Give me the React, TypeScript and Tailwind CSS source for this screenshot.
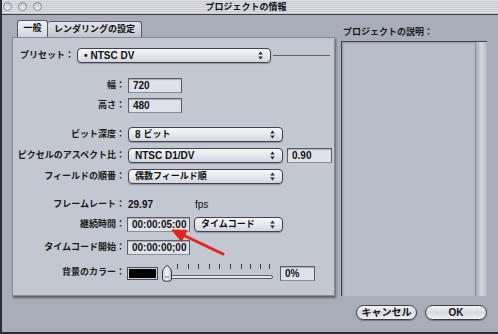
import React from "react";

const font = "font-['Liberation_Sans','Noto_Sans_CJK_JP',sans-serif]";

function Arrows() {
  return (
    <svg width="5" height="9" viewBox="0 0 5 9" className="shrink-0">
      <path d="M2.5 0.5L4.8 3.4H0.2z M2.5 8.5L0.2 5.6h4.6z" fill="#2a2c33" />
    </svg>
  );
}

function Select({ className, children }: { className: string; children: React.ReactNode }) {
  return (
    <div
      className={`flex h-[15px] shrink-0 items-center justify-between rounded-[4px] border border-[#3e4251] bg-gradient-to-b from-[#f7f8fa] via-[#e6e8ee] to-[#d3d6de] pl-[6px] pr-[7px] shadow-[0_1px_1px_rgba(0,0,0,0.25)] ${className}`}
    >
      <span className="flex items-center text-[#111]">{children}</span>
      <Arrows />
    </div>
  );
}

function Field({ className, children }: { className: string; children: React.ReactNode }) {
  return (
    <div
      className={`flex h-[15px] shrink-0 items-center border border-[#5a5e6b] border-b-[#8a8e9a] bg-[#dfe2ea] pl-[4px] text-[10px] font-bold text-[#111] shadow-[inset_0_1px_1px_rgba(0,0,0,0.25)] ${className}`}
    >
      {children}
    </div>
  );
}

function Row({ label, className, children }: { label: string; className: string; children: React.ReactNode }) {
  return (
    <div className={`flex items-center ${className}`}>
      <span className="w-[112px] shrink-0 text-right text-[9px] font-bold text-[#1a1a1a]">{label}</span>
      <div className="ml-[3px] flex items-center">{children}</div>
    </div>
  );
}

function Slider() {
  const ticks = [15, 26, 36, 47, 57, 68, 79, 88, 98, 107];
  return (
    <svg width="112" height="18" viewBox="0 0 112 18" className="ml-[4px] shrink-0">
      <defs>
        <linearGradient id="thumb" x1="0" x2="1" y1="0" y2="0">
          <stop offset="0" stopColor="#c9ccd4" />
          <stop offset="0.5" stopColor="#f4f5f8" />
          <stop offset="1" stopColor="#b9bcc6" />
        </linearGradient>
      </defs>
      {ticks.map((x) => (
        <line key={x} x1={x + 0.5} x2={x + 0.5} y1="0" y2="5" stroke="#3a3c44" strokeWidth="1" />
      ))}
      <rect x="1.5" y="11.5" width="109" height="3" rx="1.5" fill="#e6e8ee" stroke="#5a5d68" />
      <path
        d="M5 1.5C8 3.5 9.5 5.5 9.5 8L9.5 14.5Q9.5 17.2 7 17.2L3 17.2Q0.5 17.2 0.5 14.5L0.5 8C0.5 5.5 2 3.5 5 1.5Z"
        fill="url(#thumb)"
        stroke="#33353d"
      />
      <line x1="3" x2="7" y1="13" y2="13" stroke="#777" />
    </svg>
  );
}

function Button({ className, children }: { className: string; children: React.ReactNode }) {
  return (
    <div
      className={`flex h-[15px] items-center justify-center rounded-full border border-[#3c3f4a] bg-gradient-to-b from-[#f3f4f7] via-[#d7dae2] to-[#eef0f4] text-[10px] font-bold text-[#111] shadow-[0_1px_1px_rgba(0,0,0,0.3)] ${className}`}
    >
      {children}
    </div>
  );
}

export default function App() {
  return (
    <div
      className={`relative flex h-[334px] w-[498px] flex-col overflow-hidden border-b-2 border-l-2 border-[#2a2d39] bg-[#a9adb9] ${font}`}
    >
      {/* title bar */}
      <div className="relative flex h-[15px] shrink-0 items-center justify-center border-b border-[#3b3e4c] bg-[repeating-linear-gradient(0deg,#c8cad2_0px,#c8cad2_1px,#dfe0e6_1px,#dfe0e6_2px)] pr-[8px]">
        <div className="absolute left-[1px] top-[2px] flex gap-[6px]">
          {[0, 1, 2].map((i) => (
            <div
              key={i}
              className="h-[9px] w-[9px] rounded-full border border-[#878a94] bg-gradient-to-b from-[#c4c6cd] to-[#eeeff2]"
            />
          ))}
        </div>
        <span className="text-[9px] font-bold leading-none text-[#111]">プロジェクトの情報</span>
      </div>

      <div className="flex">
        {/* left: tabs + panel */}
        <div className="ml-[10px] flex flex-col pt-[5px]">
          <div className="ml-[5px] flex h-[17px] items-end">
            <div className="flex h-[17px] w-[31px] items-center justify-center rounded-t-[3px] border border-b-0 border-[#55596a] bg-gradient-to-b from-[#f2f3f6] to-[#d2d5dd] text-[9px] font-bold text-[#111]">
              一般
            </div>
            <div className="flex h-[16px] w-[94px] items-center justify-center rounded-t-[3px] border border-b-0 border-l-0 border-[#55596a] bg-gradient-to-b from-[#e2e4ea] to-[#c0c3cd] text-[9px] font-bold text-[#111]">
              レンダリングの設定
            </div>
          </div>

          <div className="relative flex h-[259px] w-[323px] flex-col border border-[#878b97] bg-[#c3c7d2] pt-[10px] shadow-[1px_2px_2px_rgba(0,0,0,0.45)]">
            {/* preset */}
            <div className="flex h-[15px] items-center pl-[7px]">
              <span className="w-[57px] shrink-0 text-[9px] font-bold text-[#1a1a1a]">プリセット：</span>
              <Select className="w-[194px]">
                <span className="mr-[3px] text-[10px] font-bold">•</span>
                <span className="text-[10px] font-bold">NTSC DV</span>
              </Select>
              <div className="ml-[2px] h-px w-[57px] bg-[#5d606b]" />
            </div>

            <Row label="幅：" className="mt-[15px] h-[15px]">
              <Field className="w-[54px]">720</Field>
            </Row>
            <Row label="高さ：" className="mt-[5px] h-[15px]">
              <Field className="w-[54px]">480</Field>
            </Row>

            <Row label="ビット深度：" className="mt-[14px] h-[15px]">
              <Select className="w-[155px]">
                <span className="text-[10px] font-bold">8</span>
                <span className="ml-[3px] text-[9px] font-bold">ビット</span>
              </Select>
            </Row>
            <Row label="ピクセルのアスペクト比：" className="mt-[6px] h-[15px]">
              <Select className="w-[155px]">
                <span className="text-[10px] font-bold">NTSC D1/DV</span>
              </Select>
              <Field className="ml-[4px] w-[45px]">0.90</Field>
            </Row>
            <Row label="フィールドの順番：" className="mt-[6px] h-[15px]">
              <Select className="w-[155px]">
                <span className="text-[9px] font-bold">偶数フィールド順</span>
              </Select>
            </Row>

            <Row label="フレームレート：" className="mt-[13px] h-[15px]">
              <span className="w-[67px] text-[10px] font-bold text-[#111]">29.97</span>
              <span className="text-[10px] text-[#111]">fps</span>
            </Row>

            <Row label="継続時間：" className="mt-[5px] h-[15px]">
              <Field className="-ml-[1px] w-[63px] shadow-[0_0_0_2px_#8fb0e8,inset_0_1px_1px_rgba(0,0,0,0.25)]">
                00:00:05:00
              </Field>
              <Select className="ml-[4px] w-[89px]">
                <span className="text-[9px] font-bold">タイムコード</span>
              </Select>
            </Row>
            <Row label="タイムコード開始：" className="mt-[8px] h-[15px]">
              <Field className="-ml-[1px] w-[63px]">00:00:00;00</Field>
            </Row>

            <Row label="背景のカラー：" className="mt-[9px] h-[18px]">
              <div className="-ml-[1px] h-[13px] w-[31px] border border-[#4a4d57] bg-[#cfd2da] p-[1px]">
                <div className="h-full w-full bg-black" />
              </div>
              <Slider />
              <Field className="ml-[6px] h-[14px] w-[35px]">0%</Field>
            </Row>

            {/* annotation arrow */}
            <svg className="pointer-events-none absolute left-0 top-0" width="323" height="259">
              <line x1="210" y1="216" x2="170" y2="197" stroke="#e3241c" strokeWidth="3" strokeLinecap="round" />
              <path d="M159 192L174 192.2L168.5 203.5Z" fill="#e3241c" stroke="#e3241c" strokeWidth="1" strokeLinejoin="round" />
            </svg>
          </div>
        </div>

        {/* right: description */}
        <div className="ml-[6px] flex flex-col pt-[12px]">
          <span className="ml-[2px] h-[11px] text-[9px] font-bold leading-[11px] text-[#1a1a1a]">
            プロジェクトの説明：
          </span>
          <div className="mt-[3px] flex h-[255px] w-[146px] border-l border-t border-[#3f4252] bg-[#b9bdc9] shadow-[inset_1px_1px_2px_rgba(0,0,0,0.2)]">
            <div className="flex-1" />
            <div className="w-[12px] border-l border-[#8a8e99] bg-gradient-to-r from-[#a8acb7] via-[#d4d7df] to-[#b4b8c3]" />
          </div>
        </div>
      </div>

      <div className="mt-[9px] flex justify-end gap-[8px] pr-[11px]">
        <Button className="w-[61px] text-[9px]">キャンセル</Button>
        <Button className="w-[62px] from-[#dfe2e9] via-[#bfc3cd] to-[#d6d9e1]">OK</Button>
      </div>
    </div>
  );
}
